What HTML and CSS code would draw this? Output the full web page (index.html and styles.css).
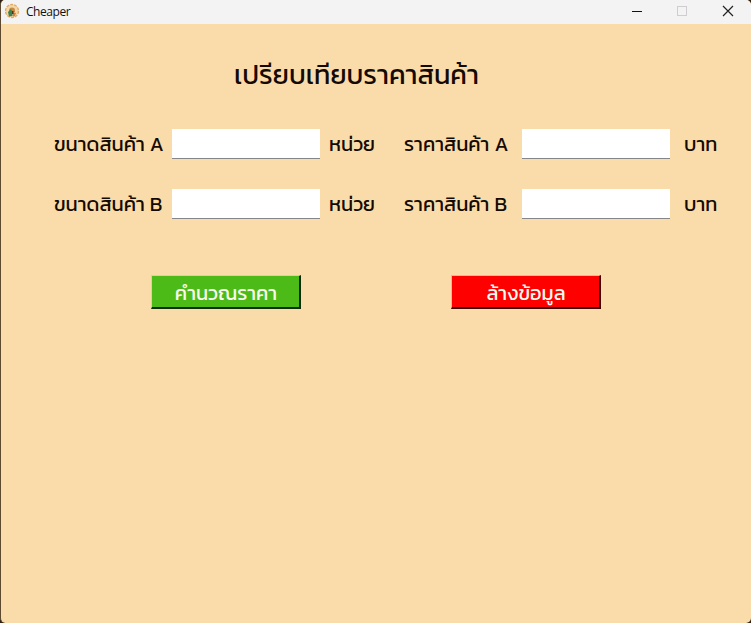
FILE: index.html
```html
<!DOCTYPE html>
<html lang="th">
<head>
<meta charset="utf-8">
<title>Cheaper</title>
<link rel="stylesheet" href="styles.css">
</head>
<body>
<div class="window">
  <header class="titlebar">
    <svg class="app-icon" width="16" height="16" viewBox="0 0 16 16">
      <circle cx="8" cy="8" r="6.500" fill="#f3d7a5" stroke="#e0ab68" stroke-width="1.300" stroke-dasharray="3 1"/>
      <path d="M5 7.500a3 3 0 0 1 6 0v1.500H5z" fill="#c88b45"/>
      <path d="M4 9l3-3 1.500 3v4L5 13.500z" fill="#3d8051"/>
      <path d="M9 9l3 1-1 3-2 .5z" fill="#d4803c"/>
      <path d="M8 8h1.500v3H8z" fill="#473527"/>
    </svg>
    <span class="app-name">Cheaper</span>
    <div class="controls">
      <svg width="12" height="12" viewBox="0 0 12 12"><path d="M0 6.500h10" stroke="#111" stroke-width="1"/></svg>
      <svg width="12" height="12" viewBox="0 0 12 12"><rect x=".5" y="1.500" width="9" height="9" fill="none" stroke="#cfcdcf"/></svg>
      <svg width="12" height="12" viewBox="0 0 12 12"><path d="M1 1l10 10M11 1L1 11" stroke="#222" stroke-width="1.200"/></svg>
    </div>
  </header>
  <main class="content">
    <h1 class="heading">เปรียบเทียบราคาสินค้า</h1>
    <form class="fields">
      <label class="label" for="sa">ขนาดสินค้า A</label><input class="entry" id="sa"><span class="unit">หน่วย</span>
      <label class="label" for="pa">ราคาสินค้า A</label><input class="entry" id="pa"><span class="baht">บาท</span>
      <label class="label" for="sb">ขนาดสินค้า B</label><input class="entry" id="sb"><span class="unit">หน่วย</span>
      <label class="label" for="pb">ราคาสินค้า B</label><input class="entry" id="pb"><span class="baht">บาท</span>
    </form>
    <div class="actions">
      <button class="button calc">คำนวณราคา</button>
      <button class="button clear">ล้างข้อมูล</button>
    </div>
  </main>
</div>
</body>
</html>
```
FILE: styles.css
```css
* { box-sizing: border-box; }
body { margin: 0; background: #302014; }
.window {
  height: 623px;
  background: #fadcaa;
  border-left: 1px solid #5c4930;
  border-radius: 5px;
  overflow: hidden;
  font-family: Kanit, "Noto Sans Thai", "Noto Sans", "Open Sans", sans-serif;
  color: #140a03;
}
.titlebar {
  height: 24px;
  display: flex;
  align-items: center;
  padding: 0 17px 2px 3px;
  background: #f4f3f4;
}
.app-name { margin: 1px 0 0 6px; font: 12px "Open Sans", sans-serif; letter-spacing: -.45px; color: #111; }
.controls { display: flex; gap: 33px; margin-left: auto; }
.heading {
  margin: 0;
  height: 105px;
  padding: 26px 0 0 233px;
  font-size: 27px;
  font-weight: 400;
  line-height: 50px;
  letter-spacing: .03px;
  white-space: nowrap;
}
.fields {
  display: grid;
  grid-template-columns: 118px 148px 84px 118px 148px 62px;
  grid-template-rows: 30px 30px;
  row-gap: 30px;
  padding-left: 53px;
  font-size: 20px;
  line-height: 30px;
  word-spacing: .5px;
  white-space: nowrap;
}
.entry { width: 100%; height: 30px; border: 0; border-bottom: 1px solid #85868a; background: #fff; }
.unit { padding-left: 9px; }
.baht { padding-left: 14px; }
.actions { display: flex; gap: 150px; padding: 56px 0 0 150px; }
.button {
  width: 150px;
  height: 34px;
  padding: 2px 0 0 1px;
  border: 1px solid;
  border-width: 1px 2px 2px 1px;
  font: inherit;
  font-size: 20px;
  line-height: 30px;
  white-space: nowrap;
  color: #f8fbee;
}
.calc { background: #4dbb17; border-color: #c9df8c #102c04 #102c04 #c9df8c; }
.clear { background: #fe0000; border-color: #ffb080 #3a0000 #3a0000 #ffb080; }
```
